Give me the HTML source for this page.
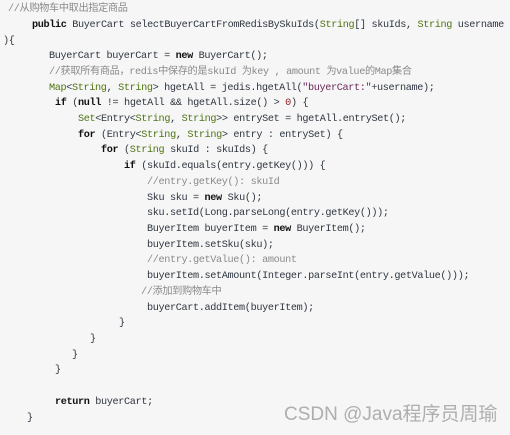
<!DOCTYPE html>
<html><head><meta charset="utf-8"><style>
html,body{margin:0;padding:0;}
body{width:510px;height:435px;background:#f6f6f6;overflow:hidden;position:relative;font-family:"Liberation Mono","Noto Sans CJK SC",monospace;font-size:10.2px;letter-spacing:-0.36px;color:#2f3640;}
.l{position:absolute;white-space:pre;line-height:14px;}
.k{color:#111;font-weight:bold;}
.t{color:#4f7412;}
.c{color:#8a8a8a;}
.s{color:#6a2a5a;}
.n{color:#8b1a1a;}
.wm{position:absolute;left:284px;top:399px;font-family:"Liberation Sans","Noto Sans CJK SC",sans-serif;font-size:19px;letter-spacing:0;color:rgba(150,150,150,0.75);white-space:nowrap;}
</style></head><body>
<div class="l c" style="left:8px;top:3px">//从购物车中取出指定商品</div>
<div class="l" style="left:32px;top:19px"><span class="k">public</span> BuyerCart selectBuyerCartFromRedisBySkuIds(<span class="t">String</span>[] skuIds, <span class="t">String</span> username</div>
<div class="l" style="left:3px;top:35px">){</div>
<div class="l" style="left:49px;top:50px">BuyerCart buyerCart = <span class="k">new</span> BuyerCart();</div>
<div class="l c" style="left:49px;top:66px">//获取所有商品，redis中保存的是skuId 为key , amount 为value的Map集合</div>
<div class="l" style="left:49px;top:82px"><span class="t">Map</span>&lt;<span class="t">String</span>, <span class="t">String</span>&gt; hgetAll = jedis.hgetAll(<span class="s">"buyerCart:"</span>+username);</div>
<div class="l" style="left:55px;top:97px"><span class="k">if</span> (<span class="k">null</span> != hgetAll &amp;&amp; hgetAll.size() &gt; <span class="n">0</span>) {</div>
<div class="l" style="left:78px;top:113px"><span class="t">Set</span>&lt;Entry&lt;<span class="t">String</span>, <span class="t">String</span>&gt;&gt; entrySet = hgetAll.entrySet();</div>
<div class="l" style="left:78px;top:129px"><span class="k">for</span> (Entry&lt;<span class="t">String</span>, <span class="t">String</span>&gt; entry : entrySet) {</div>
<div class="l" style="left:101px;top:144px"><span class="k">for</span> (<span class="t">String</span> skuId : skuIds) {</div>
<div class="l" style="left:124px;top:160px"><span class="k">if</span> (skuId.equals(entry.getKey())) {</div>
<div class="l c" style="left:147px;top:176px">//entry.getKey(): skuId</div>
<div class="l" style="left:147px;top:192px">Sku sku = <span class="k">new</span> Sku();</div>
<div class="l" style="left:147px;top:207px">sku.setId(Long.parseLong(entry.getKey()));</div>
<div class="l" style="left:147px;top:223px">BuyerItem buyerItem = <span class="k">new</span> BuyerItem();</div>
<div class="l" style="left:147px;top:239px">buyerItem.setSku(sku);</div>
<div class="l c" style="left:147px;top:254px">//entry.getValue(): amount</div>
<div class="l" style="left:147px;top:270px">buyerItem.setAmount(Integer.parseInt(entry.getValue()));</div>
<div class="l c" style="left:141px;top:286px">//添加到购物车中</div>
<div class="l" style="left:147px;top:302px">buyerCart.addItem(buyerItem);</div>
<div class="l" style="left:119px;top:317px">}</div>
<div class="l" style="left:90px;top:333px">}</div>
<div class="l" style="left:72px;top:349px">}</div>
<div class="l" style="left:55px;top:364px">}</div>
<div class="l" style="left:55px;top:396px"><span class="k">return</span> buyerCart;</div>
<div class="l" style="left:27px;top:412px">}</div>
<div class="wm">CSDN @Java程序员周瑜</div>
</body></html>
